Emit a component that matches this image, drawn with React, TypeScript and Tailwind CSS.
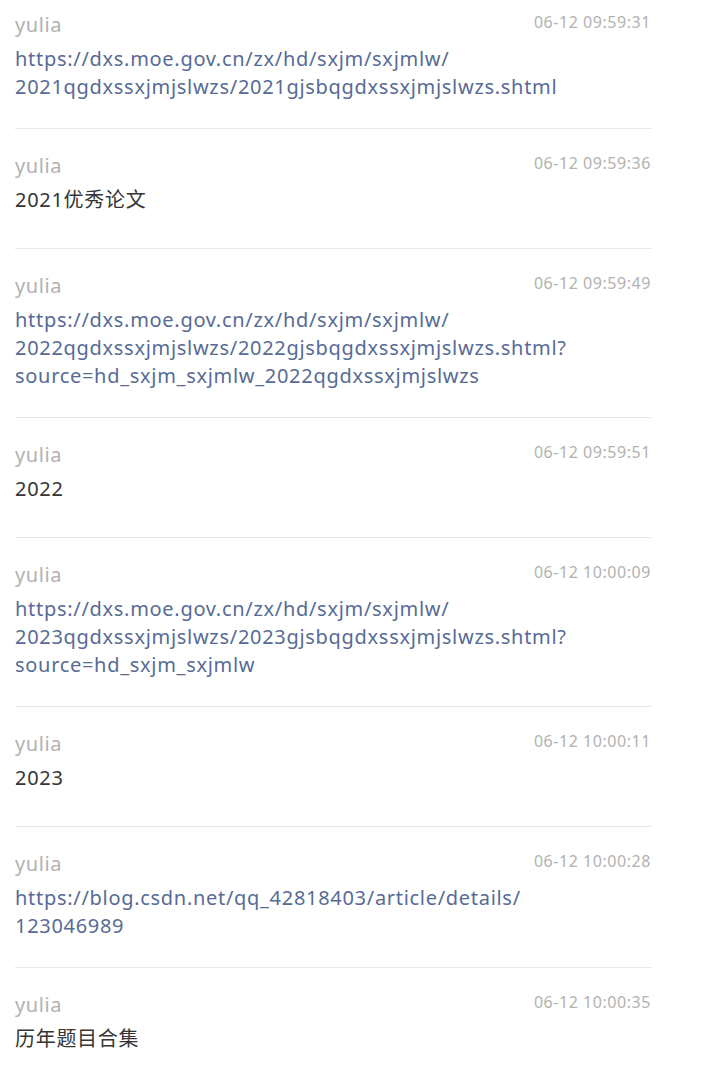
const messages = [
  {
    name: 'yulia',
    time: '06-12 09:59:31',
    text: 'https://dxs.moe.gov.cn/zx/hd/sxjm/sxjmlw/\n2021qgdxssxjmjslwzs/2021gjsbqgdxssxjmjslwzs.shtml',
    link: true,
  },
  { name: 'yulia', time: '06-12 09:59:36', text: '2021优秀论文', link: false },
  {
    name: 'yulia',
    time: '06-12 09:59:49',
    text: 'https://dxs.moe.gov.cn/zx/hd/sxjm/sxjmlw/\n2022qgdxssxjmjslwzs/2022gjsbqgdxssxjmjslwzs.shtml?\nsource=hd_sxjm_sxjmlw_2022qgdxssxjmjslwzs',
    link: true,
  },
  { name: 'yulia', time: '06-12 09:59:51', text: '2022', link: false },
  {
    name: 'yulia',
    time: '06-12 10:00:09',
    text: 'https://dxs.moe.gov.cn/zx/hd/sxjm/sxjmlw/\n2023qgdxssxjmjslwzs/2023gjsbqgdxssxjmjslwzs.shtml?\nsource=hd_sxjm_sxjmlw',
    link: true,
  },
  { name: 'yulia', time: '06-12 10:00:11', text: '2023', link: false },
  {
    name: 'yulia',
    time: '06-12 10:00:28',
    text: 'https://blog.csdn.net/qq_42818403/article/details/\n123046989',
    link: true,
  },
  { name: 'yulia', time: '06-12 10:00:35', text: '历年题目合集', link: false },
];

export default function App() {
  return (
    <div
      className="min-h-[1068px] bg-white pl-[15px] pr-[75px]"
      style={{ fontFamily: '"Noto Sans", "Noto Sans CJK SC", sans-serif' }}
    >
      {messages.map((m, i) => (
        <div
          key={i}
          className={
            (i === 0 ? 'pt-[10px] ' : 'pt-[22px] ') +
            'border-b border-[#e7e7e7] pb-[27px] last:border-b-0'
          }
        >
          <div className="flex h-[28px] items-start justify-between">
            <span className="text-[20px] leading-[30px] tracking-[0.6px] text-[#b2b2b2]">{m.name}</span>
            <span className="text-[16px] leading-[24px] tracking-[0.55px] text-[#b2b2b2]">{m.time}</span>
          </div>
          <div
            className={
              'mt-[7px] min-h-[35px] whitespace-pre-line text-[20px] leading-[28px] tracking-[0.7px] ' +
              (m.link ? 'text-[#576b95]' : 'text-[#353535]')
            }
          >
            {m.text}
          </div>
        </div>
      ))}
    </div>
  );
}
